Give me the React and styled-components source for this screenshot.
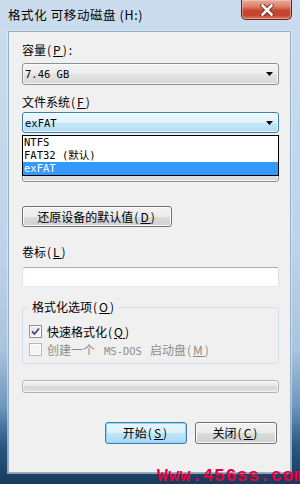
import React from "react";
import styled, { createGlobalStyle } from "styled-components";

const UI = `"Noto Sans CJK SC", "Noto Sans", sans-serif`;
const MONO = `"DejaVu Sans Mono", "Noto Sans CJK SC", monospace`;

const GlobalStyle = createGlobalStyle`
  html, body { margin: 0; padding: 0; background: #ffffff; }
  #root { width: 300px; height: 484px; }
`;

const Window = styled.div`
  position: relative;
  width: 300px;
  height: 484px;
  box-sizing: border-box;
  overflow: hidden;
  display: flex;
  flex-direction: column;
  background: linear-gradient(
    180deg,
    #cadcee 0%,
    #bfd4ea 50%,
    #aac4df 72%,
    #6f96bd 84%,
    #2c5781 92%,
    #183b5d 100%
  );
  font-family: ${UI};
  font-size: 12px;
  color: #000;
`;

const TitleBar = styled.div`
  height: 31px;
  flex: none;
  display: flex;
  justify-content: space-between;
  align-items: flex-start;
  padding: 0 8px 0 8px;
  box-sizing: border-box;
`;

const Title = styled.div`
  margin-top: 6px;
  line-height: 18px;
  font-size: 12.5px;
  color: #000;
  letter-spacing: 0.6px;
`;

const CloseButton = styled.div`
  width: 51px;
  height: 20px;
  box-sizing: border-box;
  border: 1px solid #5e231b;
  border-top: none;
  border-radius: 0 0 5px 5px;
  background: linear-gradient(
    180deg,
    #e9a99a 0%,
    #dc7f6b 35%,
    #c8452e 55%,
    #c7432c 80%,
    #d8785a 100%
  );
  box-shadow: inset 0 0 0 1px rgba(255, 220, 210, 0.45);
  display: flex;
  align-items: center;
  justify-content: center;
`;

const Client = styled.div`
  flex: 1;
  margin: 0 9px 11px 8px;
  border: 1px solid #98aec6;
  background: #f0f0f0;
  padding: 0 11px 0 13px;
  display: flex;
  flex-direction: column;
  box-shadow: 0 0 0 1px rgba(230, 240, 250, 0.55);
`;

const FieldLabel = styled.div`
  margin-top: ${(p) => p.$mt}px;
  height: 16px;
  line-height: 16px;
  font-size: 12px;
  white-space: nowrap;
`;

const Spacer = styled.div`
  margin-top: ${(p) => p.$mt}px;
  height: ${(p) => p.$h}px;
`;

const Mnem = styled.span`
  letter-spacing: 2px;
  margin-left: 1px;
`;

const U = styled.span`
  text-decoration: underline;
  text-underline-offset: 1px;
`;

const M = ({ k }) => (
  <Mnem>
    (<U>{k}</U>)
  </Mnem>
);

const ComboWrap = styled.div`
  position: relative;
  margin-top: ${(p) => p.$mt}px;
`;

const Combo = styled.div`
  height: ${(p) => p.$h}px;
  box-sizing: border-box;
  border: 1px solid ${(p) => (p.$active ? "#3c7fb1" : "#8e8f8f")};
  border-radius: 3px;
  background: ${(p) =>
    p.$active
      ? "linear-gradient(180deg, #eef8fd 0%, #dff2fc 50%, #c6e7f9 50%, #b3ddf5 100%)"
      : "linear-gradient(180deg, #f3f3f3 0%, #ececec 50%, #e2e2e2 50%, #dadada 100%)"};
  box-shadow: inset 0 0 0 1px rgba(255, 255, 255, 0.7);
  display: flex;
  align-items: center;
  justify-content: space-between;
  padding: 0 5px 0 2px;
  font-family: ${MONO};
  font-size: 10.5px;
  color: #000;
`;

const DropList = styled.ul`
  position: absolute;
  left: 0;
  right: 0;
  top: calc(100% + 2px);
  margin: 0;
  padding: 0;
  list-style: none;
  background: #fff;
  border: 1px solid #000;
  z-index: 3;
`;

const DropItem = styled.li`
  height: 13px;
  line-height: 13px;
  padding-left: 1px;
  font-family: ${MONO};
  font-size: 10.5px;
  white-space: nowrap;
  background: ${(p) => (p.$selected ? "#3399ff" : "transparent")};
  color: ${(p) => (p.$selected ? "#fff" : "#000")};
`;

const Button = styled.button`
  width: ${(p) => p.$w}px;
  height: ${(p) => p.$h}px;
  margin-top: ${(p) => p.$mt || 0}px;
  box-sizing: border-box;
  padding: 0;
  border: 1px solid ${(p) => (p.$default ? "#3c7fb1" : "#707070")};
  border-radius: 3px;
  background: ${(p) =>
    p.$default
      ? "linear-gradient(180deg, #eaf6fd 0%, #d9f0fc 50%, #bee6fd 50%, #a7d9f5 100%)"
      : "linear-gradient(180deg, #f2f2f2 0%, #ebebeb 50%, #dddddd 50%, #cfcfcf 100%)"};
  box-shadow: inset 0 0 0 1px ${(p) => (p.$default ? "#8fd7f7" : "#fbfbfb")};
  font-family: ${UI};
  font-size: 12px;
  line-height: 16px;
  color: #000;
  white-space: nowrap;
`;

const TextBox = styled.input`
  margin-top: 7px;
  height: 20px;
  box-sizing: border-box;
  background: #fff;
  border: 1px solid;
  border-color: #abadb3 #dbdfe6 #e3e9ef #e2e3ea;
  border-radius: 2px;
  outline: none;
  padding: 0 3px;
  font-family: ${UI};
  font-size: 12px;
`;

const Group = styled.fieldset`
  margin: 13px 0 0;
  padding: 0 6px 5px;
  border: 1px solid #d5dfe5;
  border-radius: 3px;
  min-width: 0;
`;

const Legend = styled.legend`
  padding: 0 3px;
  line-height: 14px;
  font-size: 12px;
`;

const CheckRow = styled.div`
  display: flex;
  align-items: center;
  gap: 5px;
  height: 18px;
  margin-top: ${(p) => p.$mt || 0}px;
  white-space: nowrap;
  color: ${(p) => (p.$disabled ? "#8d8d8d" : "#000")};
`;

const CheckBox = styled.span`
  flex: none;
  width: 13px;
  height: 13px;
  box-sizing: border-box;
  border: 1px solid ${(p) => (p.$disabled ? "#b8b8b8" : "#8e8f8f")};
  background: ${(p) =>
    p.$disabled
      ? "#f4f4f4"
      : "linear-gradient(135deg, #dcdde0 0%, #f2f2f2 55%, #ffffff 100%)"};
  box-shadow: inset 0 0 0 1px #fdfdfd;
  display: flex;
  align-items: center;
  justify-content: center;
`;

const Mono = styled.span`
  font-family: ${MONO};
  font-size: 10.5px;
  margin: 0 8px 0 9px;
`;

const Progress = styled.div`
  margin-top: 16px;
  height: 13px;
  box-sizing: border-box;
  border: 1px solid #b2b2b2;
  border-radius: 3px;
  background: linear-gradient(180deg, #f5f5f5 0%, #e7e7e7 50%, #d9d9d9 50%, #e0e0e0 100%);
  box-shadow: inset 0 0 0 1px rgba(255, 255, 255, 0.6);
`;

const ButtonRow = styled.div`
  margin-top: 29px;
  display: flex;
  justify-content: flex-end;
  gap: 8px;
  padding-right: 2px;
`;

const Watermark = styled.div`
  position: absolute;
  left: 157px;
  top: 467px;
  font-family: "Liberation Mono", "DejaVu Sans Mono", monospace;
  font-weight: bold;
  font-size: 18px;
  line-height: 18px;
  letter-spacing: 0.6px;
  color: #e6003c;
  white-space: nowrap;
  z-index: 5;
`;

const Arrow = () => (
  <svg width="7" height="4" viewBox="0 0 7 4">
    <path d="M0 0 H7 L3.5 4 Z" fill="#000" />
  </svg>
);

const CloseX = () => (
  <svg width="14" height="12" viewBox="0 0 14 12">
    <path d="M2.5 1.5 L11.5 10.5 M11.5 1.5 L2.5 10.5" stroke="#6a2a21" strokeWidth="4.4" strokeLinecap="square" />
    <path d="M2.5 1.5 L11.5 10.5 M11.5 1.5 L2.5 10.5" stroke="#ffffff" strokeWidth="2.6" strokeLinecap="square" />
  </svg>
);

const Check = () => (
  <svg width="9" height="9" viewBox="0 0 9 9">
    <path d="M1 4.5 L3.5 7 L8 1.5" fill="none" stroke="#3b4f7a" strokeWidth="1.8" />
  </svg>
);

export default function App() {
  return (
    <>
      <GlobalStyle />
      <Window>
        <TitleBar>
          <Title>格式化 可移动磁盘 (H:)</Title>
          <CloseButton>
            <CloseX />
          </CloseButton>
        </TitleBar>
        <Client>
          <FieldLabel $mt={10}>
            容量<M k="P" />:
          </FieldLabel>
          <ComboWrap $mt={5}>
            <Combo $h={22}>
              <span>7.46 GB</span>
              <Arrow />
            </Combo>
          </ComboWrap>

          <FieldLabel $mt={9}>
            文件系统<M k="F" />
          </FieldLabel>
          <ComboWrap $mt={2}>
            <Combo $h={21} $active>
              <span>exFAT</span>
              <Arrow />
            </Combo>
            <DropList>
              <DropItem>NTFS</DropItem>
              <DropItem>FAT32 (默认)</DropItem>
              <DropItem $selected>exFAT</DropItem>
            </DropList>
          </ComboWrap>

          <Spacer $mt={10} $h={16} />
          <ComboWrap $mt={2}>
            <Combo $h={21} />
          </ComboWrap>

          <Button $w={150} $h={21} $mt={24}>
            还原设备的默认值<M k="D" />
          </Button>

          <FieldLabel $mt={17}>
            卷标<M k="L" />
          </FieldLabel>
          <TextBox defaultValue="" />

          <Group>
            <Legend>
              格式化选项<M k="O" />
            </Legend>
            <CheckRow $mt={8}>
              <CheckBox>
                <Check />
              </CheckBox>
              <span>
                快速格式化<M k="Q" />
              </span>
            </CheckRow>
            <CheckRow $disabled>
              <CheckBox $disabled />
              <span>
                创建一个<Mono>MS-DOS</Mono>启动盘<M k="M" />
              </span>
            </CheckRow>
          </Group>

          <Progress />

          <ButtonRow>
            <Button $w={82} $h={22} $default>
              开始<M k="S" />
            </Button>
            <Button $w={82} $h={22}>
              关闭<M k="C" />
            </Button>
          </ButtonRow>
        </Client>
        <Watermark>Www.456ss.com</Watermark>
      </Window>
    </>
  );
}
